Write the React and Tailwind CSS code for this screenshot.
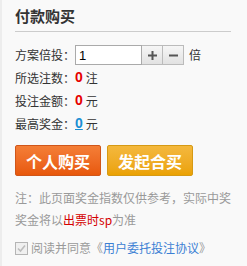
import { useState } from 'react';

const font = { fontFamily: '"Noto Sans CJK SC", "Noto Sans", sans-serif' };

export default function App() {
  const [times, setTimes] = useState(1);
  const [agreed] = useState(true);

  return (
    <div
      className="w-[247px] h-[266px] bg-[#f9f9f9] border-l-[2px] border-[#ededed] pl-[13px] text-[12px] text-[#333]"
      style={font}
    >
      {/* Header */}
      <div className="w-[216px] pt-[6px] pb-[5px] border-b border-[#cccccc]">
        <h2 className="text-[15px] leading-[20px] font-bold text-[#333]">付款购买</h2>
      </div>

      {/* Multiplier */}
      <div className="mt-[13px] h-[20px] flex items-center">
        <span>方案倍投：</span>
        <input
          value={times}
          onChange={(e) => setTimes(e.target.value)}
          className="w-[67px] h-[20px] border border-[#aaaaaa] bg-white px-[3px] text-[13px] text-black outline-none"
          style={{ fontFamily: '"Liberation Sans", Arial, sans-serif' }}
        />
        <button
          onClick={() => setTimes(Number(times) + 1)}
          className="w-[21px] h-[20px] border border-l-0 border-[#bbbbbb] bg-gradient-to-b from-[#f6f6f6] to-[#e2e2e2] flex items-center justify-center"
        >
          <svg width="9" height="9" viewBox="0 0 9 9">
            <path d="M0 4.5H9M4.5 0V9" stroke="#555" strokeWidth="2" />
          </svg>
        </button>
        <button
          onClick={() => setTimes(Math.max(1, Number(times) - 1))}
          className="w-[21px] h-[20px] border border-l-0 border-[#bbbbbb] bg-gradient-to-b from-[#f6f6f6] to-[#e2e2e2] flex items-center justify-center"
        >
          <svg width="9" height="9" viewBox="0 0 9 9">
            <path d="M0 4.5H9" stroke="#555" strokeWidth="2" />
          </svg>
        </button>
        <span className="ml-[5px]">倍</span>
      </div>

      {/* Summary rows */}
      <div className="mt-[1px] h-[23px] flex items-center">
        <span>所选注数：</span>
        <b className="text-[14px] text-[#e60000] mr-[3px]" style={{ fontFamily: '"Liberation Sans", Arial, sans-serif' }}>0</b>
        <span>注</span>
      </div>
      <div className="h-[23px] flex items-center">
        <span>投注金额：</span>
        <b className="text-[14px] text-[#e60000] mr-[3px]" style={{ fontFamily: '"Liberation Sans", Arial, sans-serif' }}>0</b>
        <span>元</span>
      </div>
      <div className="h-[23px] flex items-center">
        <span>最高奖金：</span>
        <a href="#" className="text-[14px] font-bold text-[#1a8fd3] underline mr-[3px]" style={{ fontFamily: '"Liberation Sans", Arial, sans-serif' }}>0</a>
        <span>元</span>
      </div>

      {/* Actions */}
      <div className="mt-[10px] flex gap-[6px]">
        <button className="w-[86px] h-[31px] rounded-[2px] border border-[#d0561a] bg-gradient-to-b from-[#f47e36] to-[#e8580a] text-white text-[16px] font-bold">
          个人购买
        </button>
        <button className="w-[86px] h-[31px] rounded-[2px] border border-[#d69a14] bg-gradient-to-b from-[#f4b83c] to-[#eba200] text-white text-[16px] font-bold">
          发起合买
        </button>
      </div>

      {/* Note */}
      <p className="mt-[11px] w-[220px] leading-[22px] text-[#999]">
        注：此页面奖金指数仅供参考，实际中奖奖金将以<span className="text-[#d40000]">出票时sp</span>为准
      </p>

      {/* Agreement */}
      <label className="mt-[6px] h-[22px] flex items-center text-[#999]">
        <span className="w-[13px] h-[13px] border border-[#b5b5b5] bg-[#f0f0f0] flex items-center justify-center mr-[3px]">
          {agreed && (
            <svg width="9" height="9" viewBox="0 0 9 9">
              <path d="M1 4.5L3.5 7L8 1.5" stroke="#bdbdbd" strokeWidth="1.6" fill="none" />
            </svg>
          )}
        </span>
        <span>阅读并同意《</span>
        <a href="#" className="text-[#3b7fd4]">用户委托投注协议</a>
        <span>》</span>
      </label>
    </div>
  );
}
